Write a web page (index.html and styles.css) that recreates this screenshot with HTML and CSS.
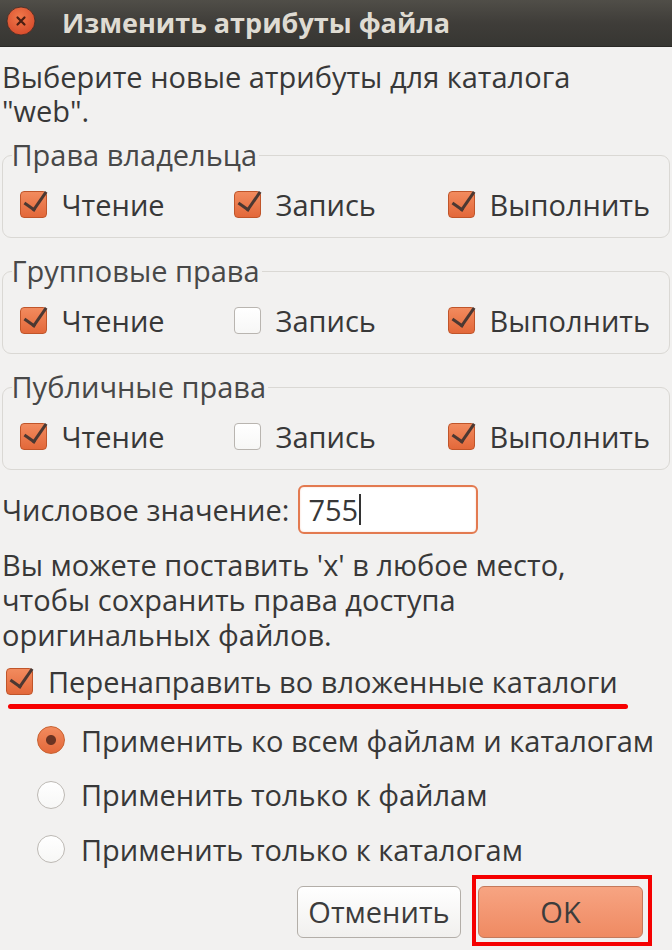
FILE: index.html
```html
<!DOCTYPE html>
<html lang="ru">
<head>
<meta charset="utf-8">
<title>Изменить атрибуты файла</title>
<link rel="stylesheet" href="styles.css">
</head>
<body>
<div class="dialog">
  <header class="titlebar">
    <span class="close-btn"><svg viewBox="0 0 30 30" width="30" height="30"><defs><radialGradient id="cg" cx="0.45" cy="0.35" r="0.7"><stop offset="0" stop-color="#f0784a"/><stop offset="1" stop-color="#d6492a"/></radialGradient></defs><circle cx="15" cy="15" r="14" fill="url(#cg)" stroke="#3a2a24" stroke-width="0.8"/><path d="M11.5 11.5 L18.5 18.5 M18.5 11.5 L11.5 18.5" stroke="#4a1e12" stroke-width="2.2" stroke-linecap="round"/></svg></span>
    <h1 class="title">Изменить атрибуты файла</h1>
  </header>
  <main class="content">
    <p class="intro">Выберите новые атрибуты для каталога<br>"web".</p>

    <fieldset class="frame">
      <legend>Права владельца</legend>
      <div class="row">
        <label class="check"><span class="box on"></span>Чтение</label>
        <label class="check"><span class="box on"></span>Запись</label>
        <label class="check"><span class="box on"></span>Выполнить</label>
      </div>
    </fieldset>

    <fieldset class="frame">
      <legend>Групповые права</legend>
      <div class="row">
        <label class="check"><span class="box on"></span>Чтение</label>
        <label class="check"><span class="box"></span>Запись</label>
        <label class="check"><span class="box on"></span>Выполнить</label>
      </div>
    </fieldset>

    <fieldset class="frame">
      <legend>Публичные права</legend>
      <div class="row">
        <label class="check"><span class="box on"></span>Чтение</label>
        <label class="check"><span class="box"></span>Запись</label>
        <label class="check"><span class="box on"></span>Выполнить</label>
      </div>
    </fieldset>

    <div class="numeric">
      <span class="numeric-label">Числовое значение:</span>
      <span class="entry">755<span class="cursor"></span></span>
    </div>

    <p class="hint">Вы можете поставить 'x' в любое место,<br>чтобы сохранить права доступа<br>оригинальных файлов.</p>

    <div class="recursive">
      <label class="check"><span class="box on"></span>Перенаправить во вложенные каталоги</label>
      <div class="underline"></div>
    </div>

    <div class="radios">
      <label class="radio"><span class="dot on"></span>Применить ко всем файлам и каталогам</label>
      <label class="radio"><span class="dot"></span>Применить только к файлам</label>
      <label class="radio"><span class="dot"></span>Применить только к каталогам</label>
    </div>

    <div class="buttons">
      <button class="btn">Отменить</button>
      <span class="highlight"><button class="btn primary">OK</button></span>
    </div>
  </main>
</div>
</body>
</html>
```

FILE: styles.css
```css
* { box-sizing: border-box; }
html, body { margin: 0; padding: 0; }
body {
  width: 672px;
  height: 950px;
  overflow: hidden;
  background: #f2f1f0;
  font-family: "Open Sans", "Noto Sans", sans-serif;
  color: #383838;
}
.dialog { width: 672px; }
.titlebar {
  height: 47px;
  background: linear-gradient(#504e48, #3f3d39 50%, #373632);
  border-bottom: 1px solid #2a2926;
  display: flex;
  align-items: center;
  padding-left: 6px;
}
.close-btn { width: 30px; height: 30px; display: block; margin-top: -4px; }
.close-btn svg { display: block; }
.title {
  margin: 0 0 0 26px;
  font-size: 27px;
  font-weight: 700;
  color: #dfdbd2;
  line-height: 34px;
}
.content { padding: 0 2px; font-size: 29px; }
p { margin: 0; }
.intro { line-height: 34px; padding-top: 13px; }
.frame {
  margin: 12px 0 0 0;
  padding: 0 16px 16px 16.5px;
  border: 1.5px solid #dad8d4;
  border-radius: 9px;
  min-width: 0;
}
.frame + .frame { margin-top: 18px; }
.frame legend {
  padding: 0 2px 0 0;
  margin-left: -8px;
  line-height: 30px;
  color: #484848;
}
.row {
  display: grid;
  grid-template-columns: 214px 214px 1fr;
  align-items: center;
  height: 34px;
  margin-top: 17px;
}
.check {
  display: flex;
  align-items: center;
  gap: 15px;
  white-space: nowrap;
  height: 34px;
}
.box {
  width: 27px;
  height: 27px;
  border-radius: 4px;
  border: 1.5px solid #b9b5b0;
  background: linear-gradient(#ffffff, #f7f7f6);
  flex: none;
  position: relative;
}
.box.on {
  border-color: #c0552a;
  background: linear-gradient(#f28b5e, #e3683a);
}
.box.on::after {
  content: "";
  position: absolute;
  left: 8px;
  top: -5px;
  width: 10px;
  height: 20px;
  border-right: 3.5px solid #4b3832;
  border-bottom: 3.5px solid #4b3832;
  transform: rotate(35deg);
}
.numeric {
  display: flex;
  align-items: center;
  margin-top: 14.5px;
  gap: 9px;
}
.entry {
  width: 180px;
  height: 49px;
  border: 2px solid #e37a50;
  border-radius: 6px;
  background: #fff;
  display: flex;
  align-items: center;
  padding-left: 8px;
  box-shadow: inset 0 0 2px rgba(229,122,79,0.35);
}
.cursor { display: inline-block; width: 2px; height: 31px; background: #333; margin-left: 1px; }
.hint { line-height: 35px; margin-top: 13px; }
.recursive { margin-top: 13px; padding-left: 4px; }
.underline {
  width: 620px;
  height: 5px;
  border-radius: 3px;
  background: #f70000;
  margin-top: 5.5px;
  margin-left: 2px;
}
.radios {
  display: flex;
  flex-direction: column;
  gap: 20.5px;
  padding-left: 35px;
  margin-top: 14px;
}
.radio {
  display: flex;
  align-items: center;
  gap: 16px;
  height: 34px;
  white-space: nowrap;
}
.dot {
  width: 28px;
  height: 28px;
  border-radius: 50%;
  border: 1.5px solid #bdb9b4;
  background: linear-gradient(#ffffff, #f7f7f6);
  flex: none;
}
.dot.on {
  border-color: #c8612f;
  background: radial-gradient(circle, #6a3322 0 4.5px, transparent 5.5px), linear-gradient(#f28b5e, #e3683a);
}
.buttons {
  display: flex;
  justify-content: flex-end;
  align-items: flex-start;
  margin-top: 8.5px;
  padding-right: 18px;
}
.btn {
  font-family: inherit;
  font-size: 29px;
  color: #3c3c3c;
  width: 164px;
  height: 52px;
  border: 1.5px solid #b3aea8;
  border-radius: 6px;
  background: linear-gradient(#ffffff, #f1f0ee);
  padding: 0;
  margin-top: 11px;
}
.highlight {
  margin-left: 11px;
  border: 4px solid #f50000;
  padding: 7px 5px 4px 2px;
  display: block;
}
.btn.primary {
  width: 165px;
  margin-top: 0;
  border-color: #c4795b;
  background: linear-gradient(#f7a482, #ef8a62);
}
```
